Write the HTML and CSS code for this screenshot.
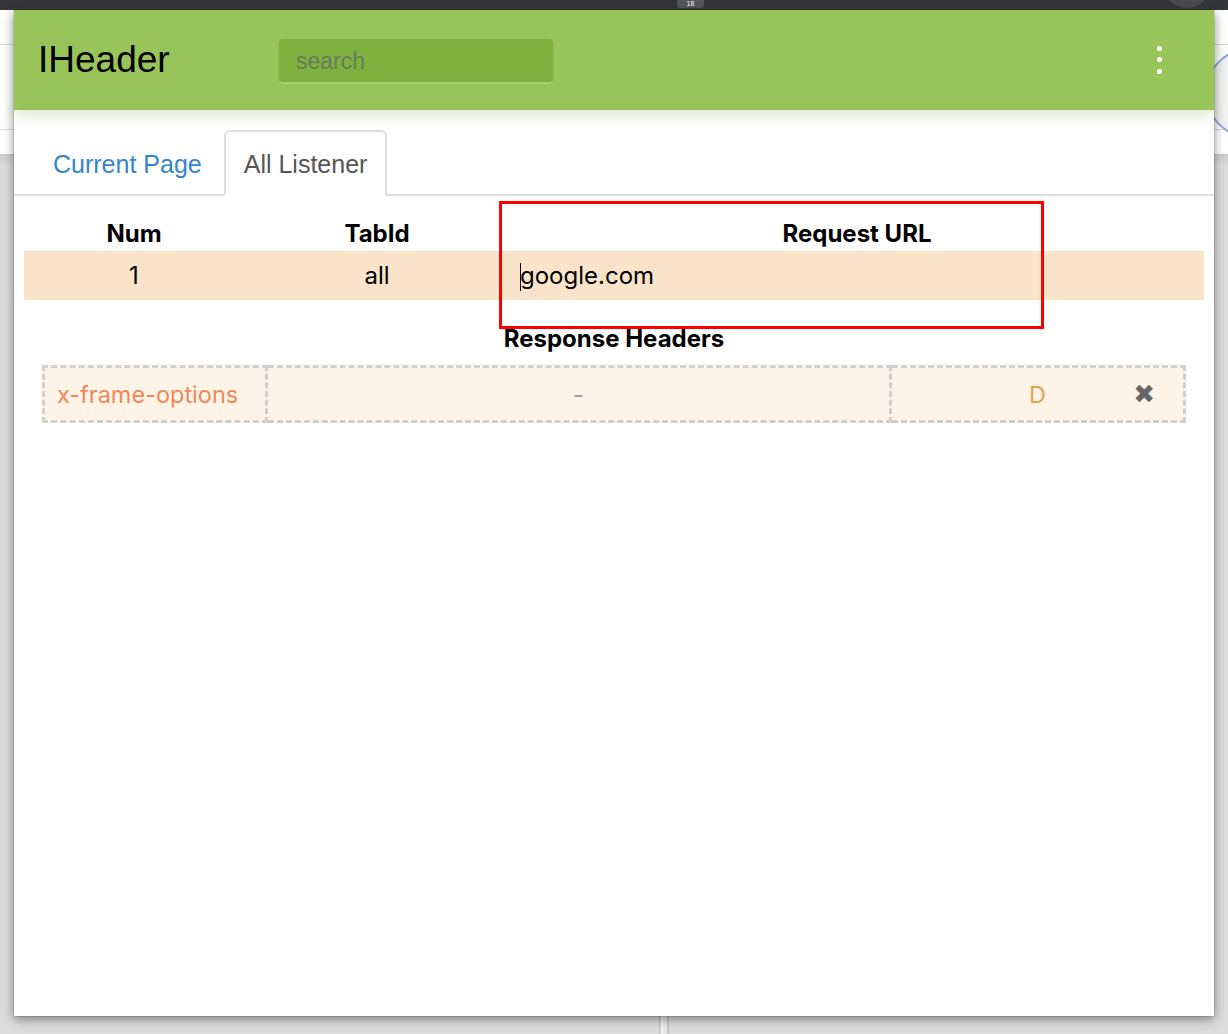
FILE: index.html
```html
<!DOCTYPE html>
<html>
<head>
<meta charset="utf-8">
<link rel="stylesheet" href="styles.css">
</head>
<body>
<div class="desktop">
  <div class="topbar">
    <span class="tabcount">18</span>
    <span class="topcircle"></span>
  </div>
  <div class="bgpage">
    <div class="bgline"></div>
    <div class="bgline"></div>
    <div class="bgcircle"></div>
  </div>
  <div class="bgrest">
    <div class="pane pane-left"></div>
    <div class="divider"></div>
    <div class="pane pane-right"></div>
  </div>
</div>

<div class="popup">
  <header class="appbar">
    <div class="title">IHeader</div>
    <input class="search" type="text" placeholder="search">
    <div class="spacer"></div>
    <div class="kebab"><span></span><span></span><span></span></div>
  </header>

  <nav class="tabs">
    <a class="tab">Current Page</a>
    <a class="tab active">All Listener</a>
  </nav>

  <table class="listeners">
    <thead>
      <tr><th class="c-num">Num</th><th class="c-tab">TabId</th><th class="c-url">Request URL</th></tr>
    </thead>
    <tbody>
      <tr class="row"><td class="c-num">1</td><td class="c-tab">all</td><td class="c-url url"><span class="caret"></span>google.com</td></tr>
    </tbody>
  </table>

  <h3 class="section">Response Headers</h3>

  <div class="hdr-row">
    <div class="hcell hname">x-frame-options</div>
    <div class="hcell hval">-</div>
    <div class="hcell hact"><span class="dmark">D</span><span class="remove">&#10006;</span></div>
  </div>

  <div class="annot"></div>
</div>
</body>
</html>
```

FILE: styles.css
```css
* { box-sizing: border-box; }
html, body { margin: 0; padding: 0; }
body {
  width: 1228px;
  height: 1034px;
  overflow: hidden;
  position: relative;
  background: #dcdcdc;
  font-family: "Liberation Sans", Arial, sans-serif;
}

/* background browser */
.desktop {
  display: flex;
  flex-direction: column;
  height: 1034px;
}
.topbar {
  height: 10px;
  background: #35363a;
  position: relative;
}
.tabcount {
  position: absolute;
  left: 677px;
  top: 0;
  width: 27px;
  height: 8px;
  border-radius: 0 0 3px 3px;
  background: #55565a;
  color: #fff;
  font-size: 7px;
  line-height: 8px;
  text-align: center;
}
.topcircle {
  position: absolute;
  left: 1163px;
  top: -40px;
  width: 48px;
  height: 48px;
  border-radius: 50%;
  background: #4a4b4f;
}
.bgpage {
  height: 145px;
  background: #fff;
  display: flex;
  flex-direction: column;
  position: relative;
  border-bottom: 1px solid #c8c8c8;
}
.bgline {
  margin-top: 34px;
  height: 1px;
  background: #d6d6d6;
}
.bgline + .bgline { margin-top: 84px; }
.bgcircle {
  position: absolute;
  left: 1205px;
  top: 38px;
  width: 90px;
  height: 90px;
  border-radius: 50%;
  border: 2px solid #8fa6e0;
  background: #f1f1f1;
}
.bgrest {
  flex: 1;
  display: flex;
  background: linear-gradient(#cfcfcf, #dcdcdc 12px);
}
.pane { flex: 1; }
.pane-left { flex: 0 0 659px; }
.divider {
  flex: 0 0 10px;
  background: linear-gradient(90deg, #bdbdbd 0, #bdbdbd 1px, #f4f4f4 2px, #e2e2e2 8px, #bdbdbd 9px, #bdbdbd 10px);
}

/* popup */
.popup {
  position: absolute;
  left: 14px;
  top: 10px;
  width: 1200px;
  height: 1006px;
  background: #fff;
  box-shadow: 0 3px 10px rgba(0,0,0,.45), 0 0 1px rgba(0,0,0,.5);
  display: flex;
  flex-direction: column;
}
.appbar {
  height: 100px;
  flex: 0 0 100px;
  background: #99c45a;
  display: flex;
  align-items: center;
  padding: 0 52px 0 24px;
  box-shadow: 0 6px 12px rgba(140,180,90,.28);
  position: relative;
  z-index: 1;
}
.title {
  font-family: "Liberation Sans", Arial, sans-serif;
  font-size: 37px;
  color: #000;
  width: 240px;
  margin-top: 0;
}
.search {
  width: 276px;
  height: 45px;
  margin-top: 3px;
  border: 1px solid #8fbc55;
  border-top-color: #84b446;
  border-bottom: 2px solid #a6cd73;
  border-radius: 5px;
  background: #7fb13e;
  padding: 0 17px;
  font-family: "Liberation Sans", Arial, sans-serif;
  font-size: 23px;
  outline: none;
}
.search::placeholder { color: #6a7a5a; }
.spacer { flex: 1; }
.kebab {
  display: flex;
  flex-direction: column;
  gap: 6.5px;
  align-items: center;
  margin-top: -1px;
}
.kebab span {
  width: 5px;
  height: 5px;
  border-radius: 50%;
  background: #fff;
}

/* tabs */
.tabs {
  margin-top: 20px;
  display: flex;
  padding-left: 19px;
  border-bottom: 2px solid #dedede;
  height: 66px;
}
.tab {
  font-family: "Liberation Sans", Arial, sans-serif;
  font-size: 25px;
  color: #3586c8;
  padding: 0 18px;
  height: 66px;
  line-height: 64px;
  margin-right: 2px;
  border: 2px solid transparent;
  border-radius: 6px 6px 0 0;
}
.tab.active {
  color: #555;
  background: #fff;
  border-color: #dedede;
  border-bottom-color: #fff;
  height: 66px;
  margin-bottom: -2px;
}

/* listeners table */
.listeners {
  margin: 19px 10px 0;
  width: 1180px;
  border-collapse: collapse;
  font-family: "Inter", "Liberation Sans", sans-serif;
  font-size: 24px;
  color: #000;
}
.listeners th {
  height: 36px;
  font-weight: 700;
  text-align: center;
  padding: 0;
}
.listeners td {
  height: 49px;
  text-align: center;
  padding: 0;
}
.row { background: #fae4c9; }
.c-num { width: 220px; }
.c-tab { width: 266px; }
.listeners td.url { text-align: left; padding-left: 10px; }
.caret {
  display: inline-block;
  width: 1px;
  height: 28px;
  background: #000;
  vertical-align: -7px;
  margin-right: -1px;
}

.section {
  margin: 25px 0 0;
  text-align: center;
  font-family: "Inter", "Liberation Sans", sans-serif;
  font-size: 24px;
  font-weight: 700;
  line-height: 28px;
  color: #000;
}

.hdr-row {
  margin: 12px 0 0 28px;
  width: 1144px;
  display: flex;
  height: 58px;
}
.hcell {
  border: 3px dashed #d0d0d0;
  background: #fdf4e7;
  display: flex;
  align-items: center;
  font-family: "Inter", "Liberation Sans", sans-serif;
  font-size: 23.5px;
}
.hname {
  width: 226px;
  padding-left: 12px;
  color: #f0875a;
}
.hval {
  width: 624px;
  justify-content: center;
  color: #999;
  border-left: none;
}
.hact {
  flex: 1;
  justify-content: center;
  position: relative;
  border-left: none;
}
.dmark { color: #e6a04f; }
.remove {
  position: absolute;
  right: 28px;
  top: 50%;
  transform: translateY(-50%);
  color: #666;
  font-family: "DejaVu Sans", sans-serif;
  font-size: 26px;
  line-height: 1;
}

.annot {
  position: absolute;
  left: 485px;
  top: 191px;
  width: 545px;
  height: 128px;
  border: 3px solid #f00;
}
```
